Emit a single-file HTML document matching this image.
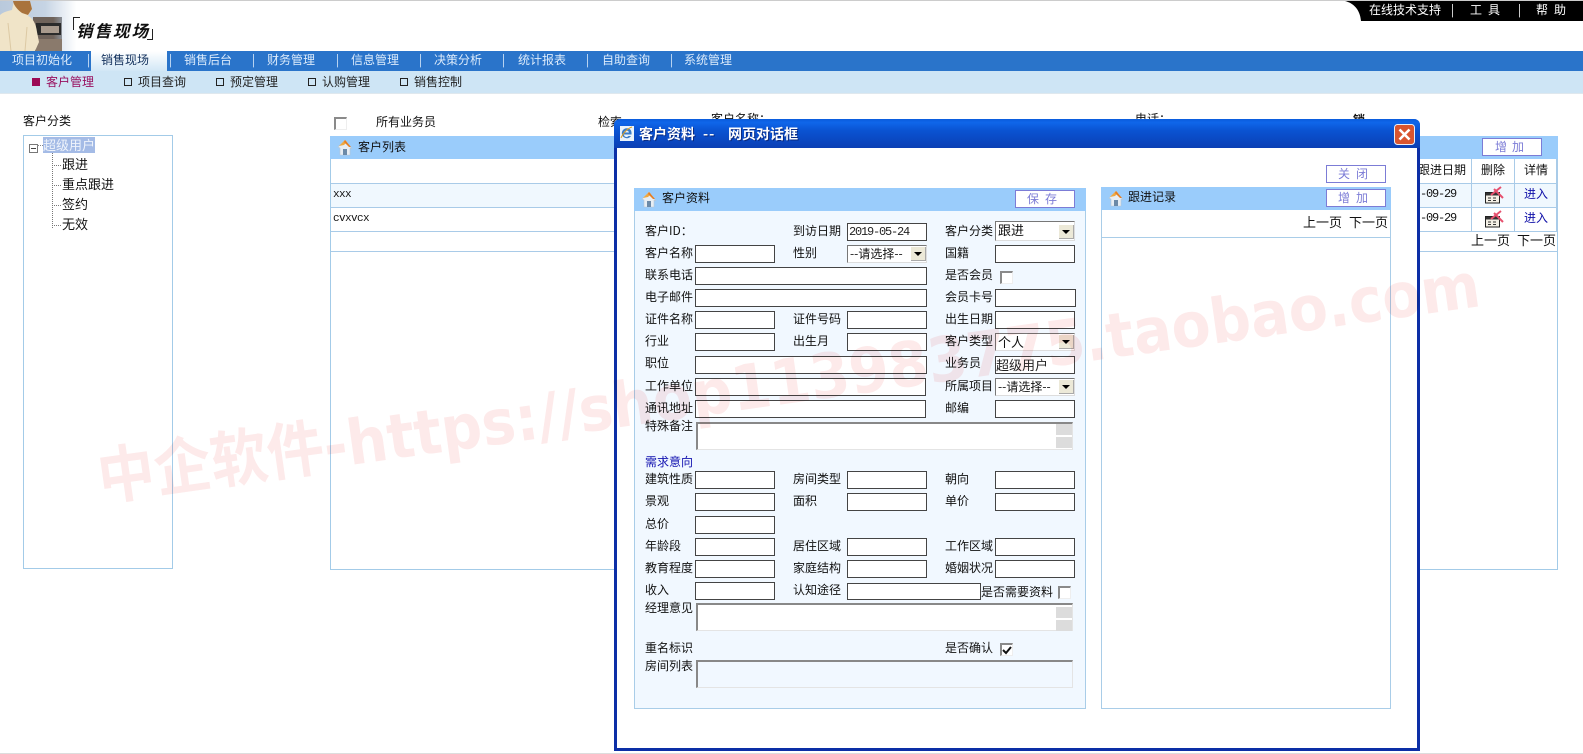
<!DOCTYPE html>
<html><head><meta charset="utf-8"><title>销售现场</title>
<style>
html,body{margin:0;padding:0;background:#fff;width:1583px;height:754px;overflow:hidden}
body{position:relative;font:12px/16px "WenQuanYi Zen Hei","Noto Sans CJK SC",sans-serif;color:#111}
div,span,svg{position:absolute;white-space:nowrap}
.n{top:51px;line-height:18px;color:#dcebfb;height:18px}
.s{top:73px;line-height:17px;color:#222}
.q{width:6px;height:6px;border:1px solid #222;top:78px}
.i{border:1px solid #444;background:#fff;height:16px;width:78px;box-sizing:content-box;font:12px/16px "Liberation Mono",monospace;letter-spacing:-1.2px;color:#222}
.b{border:1px solid #7c7cd6;background:#fff;color:#7c7cd6;width:58px;height:16px;text-align:center;line-height:16px;letter-spacing:3px}
.h{background:#9accfb}
.se{border:1px solid #777;border-right-color:#ddd;border-bottom-color:#ddd;background:#fff;height:16px;width:78px;font-size:12px;line-height:15px;padding-left:2px;box-sizing:content-box;overflow:hidden}
.se i{position:absolute;right:0;top:1px;width:15px;height:14px;background:#ece9d8;border-right:1px solid #aaa;border-bottom:1px solid #aaa;box-sizing:border-box}
.se i b{position:absolute;left:3px;top:5px;width:0;height:0;border-left:4px solid transparent;border-right:4px solid transparent;border-top:4px solid #000}
.c{width:10px;height:10px;border-top:2px solid #8a8a8a;border-left:2px solid #8a8a8a;border-right:1px solid #eee;border-bottom:1px solid #eee;background:#fff}
.t{border-top:2px solid #888;border-left:2px solid #888;border-right:1px solid #e4e4e4;border-bottom:1px solid #e4e4e4;background:#fff;left:696px;width:374px;height:25px}
.sb{left:1056px;width:16px;height:11px;background:#dcdcdc}
.ln{left:331px;width:1227px;height:1px;background:#a9cbe8}
</style></head><body>
<div style="left:0;top:0;width:1583px;height:1px;background:#ccc"></div>
<svg style="left:0;top:1px" width="90" height="50" viewBox="0 0 90 50">
<defs><linearGradient id="f" x1="0" x2="1" y1="0" y2="0"><stop offset="0" stop-color="#b9c9dc"/><stop offset=".5" stop-color="#c6d4e4"/><stop offset=".85" stop-color="#fff"/></linearGradient>
<linearGradient id="m" x1="0" x2="1" y1="0" y2="0"><stop offset=".7" stop-color="#6e625a"/><stop offset="1" stop-color="#8a8f96"/></linearGradient></defs>
<rect width="90" height="50" fill="url(#f)"/>
<rect x="33" y="16" width="29" height="34" fill="url(#m)"/><rect x="36" y="22" width="25" height="12" fill="#2b2b2b"/><rect x="41" y="25" width="18" height="7" fill="#a89a8d"/><rect x="36" y="38" width="26" height="12" fill="#8a7a6c"/>
<path d="M14 0h16l2 8-4 7c5 2 8 8 9 16l2 10-4 9H0V14c3-3 8-4 12-5z" fill="#f0e4c8"/>
<path d="M13 0h17l2 8-4 6-6-2c-4-3-8-7-9-12z" fill="#a9733c"/>
<path d="M8 22l3 28M27 26l-2 24" stroke="#dcc9a4" fill="none"/>
</svg>
<div style="left:73px;top:17px;width:6px;height:12px;border-left:1px solid #222;border-top:1px solid #222"></div>
<div style="left:76px;top:20px;font:italic bold 16.500px/20px 'Noto Sans CJK SC',sans-serif;letter-spacing:2px;color:#111">销售现场</div>
<div style="left:147px;top:29px;width:5px;height:10px;border-right:1px solid #222;border-bottom:1px solid #222"></div>
<svg style="left:1345px;top:1px" width="238" height="20"><path d="M0 0h238v20H16C15 8 8 2 0 0z" fill="#000"/></svg>
<div style="left:1369px;top:2px;color:#fff;line-height:16px">在线技术支持</div>
<div style="left:1451px;top:2px;color:#fff">|</div>
<div style="left:1470px;top:2px;color:#fff;letter-spacing:6px">工具</div>
<div style="left:1518px;top:2px;color:#fff">|</div>
<div style="left:1536px;top:2px;color:#fff;letter-spacing:6px">帮助</div>

<div style="left:0;top:51px;width:1583px;height:20px;background:#2a74ca"></div>
<div style="left:91px;top:51px;width:76px;height:20px;background:linear-gradient(#fff,#d2e7f6)"></div>
<div style="left:0;top:71px;width:1583px;height:23px;background:#cee5f5"></div>
<div style="left:0;top:93px;width:1583px;height:1px;background:#dfe8ee"></div>
<div class="n" style="left:12px">项目初始化</div><div class="n" style="left:87px">|</div>
<div class="n" style="left:101px;color:#12305c">销售现场</div><div class="n" style="left:169px">|</div>
<div class="n" style="left:184px">销售后台</div><div class="n" style="left:252px">|</div>
<div class="n" style="left:267px">财务管理</div><div class="n" style="left:336px">|</div>
<div class="n" style="left:351px">信息管理</div><div class="n" style="left:419px">|</div>
<div class="n" style="left:434px">决策分析</div><div class="n" style="left:502px">|</div>
<div class="n" style="left:518px">统计报表</div><div class="n" style="left:586px">|</div>
<div class="n" style="left:602px">自助查询</div><div class="n" style="left:670px">|</div>
<div class="n" style="left:684px">系统管理</div>

<div style="left:32px;top:78px;width:8px;height:8px;background:#9c0a55"></div>
<div class="s" style="left:46px;color:#98105f">客户管理</div>
<div class="q" style="left:124px"></div><div class="s" style="left:138px">项目查询</div>
<div class="q" style="left:216px"></div><div class="s" style="left:230px">预定管理</div>
<div class="q" style="left:308px"></div><div class="s" style="left:322px">认购管理</div>
<div class="q" style="left:400px"></div><div class="s" style="left:414px">销售控制</div>

<div style="left:23px;top:113px">客户分类</div>
<div style="left:23px;top:135px;width:150px;height:434px;border:1px solid #a3cbe8;box-sizing:border-box"></div>
<div style="left:29px;top:144px;width:7px;height:7px;border:1px solid #777"></div>
<div style="left:31px;top:148px;width:5px;height:1px;background:#444"></div>
<div style="left:37px;top:145px;width:6px;border-top:1px dotted #888"></div>
<div style="left:43px;top:137px;width:52px;height:16px;background:#a4bbe6;color:#eef3fb;font-size:13px;line-height:16px">超级用户</div>
<div style="left:52px;top:153px;height:75px;border-left:1px dotted #777"></div>
<div style="left:52px;top:165px;width:9px;border-top:1px dotted #777"></div>
<div style="left:52px;top:185px;width:9px;border-top:1px dotted #777"></div>
<div style="left:52px;top:205px;width:9px;border-top:1px dotted #777"></div>
<div style="left:52px;top:225px;width:9px;border-top:1px dotted #777"></div>
<div style="left:62px;top:156px;font-size:13px">跟进</div>
<div style="left:62px;top:176px;font-size:13px">重点跟进</div>
<div style="left:62px;top:196px;font-size:13px">签约</div>
<div style="left:62px;top:216px;font-size:13px">无效</div>

<div class="c" style="left:334px;top:117px"></div>
<div style="left:376px;top:114px">所有业务员</div>
<div style="left:598px;top:114px">检索</div>
<div style="left:711px;top:111px">客户名称：</div>
<div style="left:1135px;top:111px">电话：</div>
<div style="left:1353px;top:112px;font-weight:bold">销</div>

<div style="left:330px;top:136px;width:1228px;height:434px;border-left:1px solid #a3cbe8;border-right:1px solid #a3cbe8;border-bottom:1px solid #a3cbe8;box-sizing:border-box"></div>
<div class="h" style="left:330px;top:136px;width:1228px;height:23px"></div>
<svg style="left:337px;top:139px" width="16" height="17" viewBox="0 0 16 17"><path d="M8 1L1 8l2 1v7h10V9l2 1z" fill="#e8eef4" stroke="#b9c6d2" stroke-width=".6"/><path d="M8 1L2 7l5-1 3-3z" fill="#f0a840"/><path d="M8 1l6 7-2 0-5-5z" fill="#e67e22"/><rect x="6" y="10" width="4" height="6" fill="#6c8aa8"/></svg>
<div style="left:358px;top:139px">客户列表</div>
<div class="b" style="left:1482px;top:138px;letter-spacing:5px">增加</div>
<div style="left:331px;top:184px;width:1226px;height:23px;background:#f0f8fe"></div>
<div class="ln" style="top:183px"></div><div class="ln" style="top:207px"></div><div class="ln" style="top:231px"></div><div class="ln" style="top:251px"></div>
<div style="left:1471px;top:159px;width:1px;height:72px;background:#a9cbe8"></div>
<div style="left:1514px;top:159px;width:1px;height:72px;background:#a9cbe8"></div>
<div style="left:1556px;top:159px;width:2px;height:72px;background:#a9cbe8"></div>
<div style="left:333px;top:187px;font:11px/16px 'Liberation Mono',monospace;letter-spacing:-.6px">xxx</div>
<div style="left:333px;top:211px;font:11px/16px 'Liberation Mono',monospace;letter-spacing:-.6px">cvxvcx</div>
<div style="left:1418px;top:162px">跟进日期</div>
<div style="left:1481px;top:162px">删除</div>
<div style="left:1524px;top:162px">详情</div>
<div style="left:1420px;top:186px;font:12px/16px 'Liberation Mono',monospace;letter-spacing:-1.2px">-09-29</div>
<div style="left:1420px;top:210px;font:12px/16px 'Liberation Mono',monospace;letter-spacing:-1.2px">-09-29</div>
<svg style="left:1484px;top:186px" width="20" height="18" viewBox="0 0 20 18"><rect x="1.500" y="6.500" width="14" height="10.500" fill="#f4f0e6" stroke="#222"/><rect x="2" y="7" width="13" height="2.500" fill="#333"/><path d="M4 12h3M9 12h3M4 14.500h3M9 14.500h3" stroke="#333"/><path d="M7 9L17 1M10 3l9 9" stroke="#e6506e" stroke-width="2"/></svg>
<svg style="left:1484px;top:210px" width="20" height="18" viewBox="0 0 20 18"><rect x="1.500" y="6.500" width="14" height="10.500" fill="#f4f0e6" stroke="#222"/><rect x="2" y="7" width="13" height="2.500" fill="#333"/><path d="M4 12h3M9 12h3M4 14.500h3M9 14.500h3" stroke="#333"/><path d="M7 9L17 1M10 3l9 9" stroke="#e6506e" stroke-width="2"/></svg>
<div style="left:1524px;top:186px;color:#1010a8">进入</div>
<div style="left:1524px;top:210px;color:#1010a8">进入</div>
<div style="left:1471px;top:232px;font-size:13px">上一页</div><div style="left:1517px;top:232px;font-size:13px">下一页</div>

<!-- dialog -->
<div style="left:614px;top:119px;width:806px;height:632px;background:#fff;border:3px solid #0c2fa6;border-top:0;box-sizing:border-box;border-radius:6px 6px 0 0"></div>
<div style="left:614px;top:119px;width:806px;height:29px;border-radius:6px 6px 0 0;background:linear-gradient(#0a5cdc 0,#0f66ea 12%,#0a53d2 40%,#0b3fb4 100%)"></div>
<svg style="left:619px;top:125px" width="16" height="17" viewBox="0 0 16 17"><rect x="1" y="1" width="14" height="15" fill="#eaf3fb"/><path d="M12 5.500A5 5 0 1 0 12 11H9.500a2.600 2.600 0 0 1-4.600-1.500H12.500c.2-1.500-.1-3-.5-4zM5 7.500a2.600 2.600 0 0 1 5 0z" fill="#3a7cc8"/><path d="M2 13c2-5 7-10 11-11" stroke="#e0a020" fill="none"/></svg>
<div style="left:639px;top:126px;color:#fff;font-weight:bold;font-size:14px;line-height:16px;text-shadow:1px 1px 0 #0a2a80">客户资料</div>
<div style="left:703px;top:126px;color:#fff;font-weight:bold;font-size:14px;line-height:16px;text-shadow:1px 1px 0 #0a2a80;letter-spacing:1px">--</div>
<div style="left:728px;top:126px;color:#fff;font-weight:bold;font-size:14px;line-height:16px;text-shadow:1px 1px 0 #0a2a80">网页对话框</div>
<svg style="left:1394px;top:124px" width="21" height="21" viewBox="0 0 21 21"><rect x=".5" y=".5" width="20" height="20" rx="3" fill="#d9552f" stroke="#e8eef8"/><path d="M5.500 5.500l10 10M15.500 5.500l-10 10" stroke="#fff" stroke-width="2.600"/></svg>

<div class="b" style="left:1326px;top:165px;letter-spacing:6px">关闭</div>

<div style="left:634px;top:188px;width:452px;height:521px;background:#f1f8ff;border:1px solid #a9cde8;box-sizing:border-box"></div>
<div class="h" style="left:634px;top:188px;width:452px;height:23px"></div>
<svg style="left:641px;top:191px" width="16" height="17" viewBox="0 0 16 17"><path d="M8 1L1 8l2 1v7h10V9l2 1z" fill="#e8eef4" stroke="#b9c6d2" stroke-width=".6"/><path d="M8 1L2 7l5-1 3-3z" fill="#f0a840"/><path d="M8 1l6 7-2 0-5-5z" fill="#e67e22"/><rect x="6" y="10" width="4" height="6" fill="#6c8aa8"/></svg>
<div style="left:662px;top:190px">客户资料</div>
<div class="b" style="left:1015px;top:190px;letter-spacing:6px">保存</div>

<div style="left:1101px;top:187px;width:290px;height:522px;background:#fff;border:1px solid #a9cde8;box-sizing:border-box"></div>
<div class="h" style="left:1101px;top:187px;width:290px;height:23px"></div>
<svg style="left:1108px;top:190px" width="16" height="17" viewBox="0 0 16 17"><path d="M8 1L1 8l2 1v7h10V9l2 1z" fill="#e8eef4" stroke="#b9c6d2" stroke-width=".6"/><path d="M8 1L2 7l5-1 3-3z" fill="#f0a840"/><path d="M8 1l6 7-2 0-5-5z" fill="#e67e22"/><rect x="6" y="10" width="4" height="6" fill="#6c8aa8"/></svg>
<div style="left:1128px;top:189px">跟进记录</div>
<div class="b" style="left:1326px;top:189px;letter-spacing:6px">增加</div>
<div style="left:1303px;top:214px;font-size:13px">上一页</div><div style="left:1349px;top:214px;font-size:13px">下一页</div>
<div style="left:1102px;top:237px;width:288px;height:1px;background:#a9cde8"></div>

<!-- form -->
<div style="left:645px;top:223px">客户ID：</div><div style="left:793px;top:223px">到访日期</div><div style="left:945px;top:223px">客户分类</div>
<div class="i" style="left:847px;top:223px;padding-left:1px;width:77px">2019-05-24</div>
<div class="se" style="left:995px;top:221px;width:76px;height:18px;font-size:13px">跟进<i style="top:3px"><b></b></i></div>

<div style="left:645px;top:245px">客户名称</div><div class="i" style="left:695px;top:245px"></div>
<div style="left:793px;top:245px">性别</div><div class="se" style="left:847px;top:245px;width:76px">--请选择--<i><b></b></i></div>
<div style="left:945px;top:245px">国籍</div><div class="i" style="left:995px;top:245px"></div>

<div style="left:645px;top:267px">联系电话</div><div class="i" style="left:695px;top:267px;width:230px"></div>
<div style="left:945px;top:267px">是否会员</div><div class="c" style="left:1000px;top:271px"></div>

<div style="left:645px;top:289px">电子邮件</div><div class="i" style="left:695px;top:289px;width:230px"></div>
<div style="left:945px;top:289px">会员卡号</div><div class="i" style="left:995px;top:289px;width:79px"></div>

<div style="left:645px;top:311px">证件名称</div><div class="i" style="left:695px;top:311px"></div>
<div style="left:793px;top:311px">证件号码</div><div class="i" style="left:847px;top:311px"></div>
<div style="left:945px;top:311px">出生日期</div><div class="i" style="left:995px;top:311px"></div>

<div style="left:645px;top:333px">行业</div><div class="i" style="left:695px;top:333px"></div>
<div style="left:793px;top:333px">出生月</div><div class="i" style="left:847px;top:333px"></div>
<div style="left:945px;top:333px">客户类型</div><div class="se" style="left:995px;top:333px;width:76px;font-size:13px">个人<i><b></b></i></div>

<div style="left:645px;top:355px">职位</div><div class="i" style="left:695px;top:356px;width:230px"></div>
<div style="left:945px;top:355px">业务员</div><div class="i" style="left:995px;top:356px;font:13px/16px 'WenQuanYi Zen Hei','Noto Sans CJK SC',sans-serif;letter-spacing:0">超级用户</div>

<div style="left:645px;top:378px">工作单位</div><div class="i" style="left:695px;top:378px;width:229px"></div>
<div style="left:945px;top:378px">所属项目</div><div class="se" style="left:995px;top:378px;width:76px">--请选择--<i><b></b></i></div>

<div style="left:645px;top:400px">通讯地址</div><div class="i" style="left:695px;top:400px;width:229px"></div>
<div style="left:945px;top:400px">邮编</div><div class="i" style="left:995px;top:400px"></div>

<div style="left:645px;top:418px">特殊备注</div>
<div class="t" style="top:422px"></div><div class="sb" style="top:424px"></div><div class="sb" style="top:437px"></div>

<div style="left:645px;top:454px;color:#1212b0">需求意向</div>

<div style="left:645px;top:471px">建筑性质</div><div class="i" style="left:695px;top:471px"></div>
<div style="left:793px;top:471px">房间类型</div><div class="i" style="left:847px;top:471px"></div>
<div style="left:945px;top:471px">朝向</div><div class="i" style="left:995px;top:471px"></div>

<div style="left:645px;top:493px">景观</div><div class="i" style="left:695px;top:493px"></div>
<div style="left:793px;top:493px">面积</div><div class="i" style="left:847px;top:493px"></div>
<div style="left:945px;top:493px">单价</div><div class="i" style="left:995px;top:493px"></div>

<div style="left:645px;top:516px">总价</div><div class="i" style="left:695px;top:516px"></div>

<div style="left:645px;top:538px">年龄段</div><div class="i" style="left:695px;top:538px"></div>
<div style="left:793px;top:538px">居住区域</div><div class="i" style="left:847px;top:538px"></div>
<div style="left:945px;top:538px">工作区域</div><div class="i" style="left:995px;top:538px"></div>

<div style="left:645px;top:560px">教育程度</div><div class="i" style="left:695px;top:560px"></div>
<div style="left:793px;top:560px">家庭结构</div><div class="i" style="left:847px;top:560px"></div>
<div style="left:945px;top:560px">婚姻状况</div><div class="i" style="left:995px;top:560px"></div>

<div style="left:645px;top:582px">收入</div><div class="i" style="left:695px;top:582px"></div>
<div style="left:793px;top:582px">认知途径</div><div class="i" style="left:847px;top:583px;width:132px;height:15px"></div>
<div style="left:981px;top:584px">是否需要资料</div><div class="c" style="left:1058px;top:586px"></div>

<div style="left:645px;top:600px">经理意见</div>
<div class="t" style="top:603px"></div><div class="sb" style="top:607px"></div><div class="sb" style="top:620px"></div>

<div style="left:645px;top:640px">重名标识</div><div style="left:945px;top:640px">是否确认</div>
<div class="c" style="left:1000px;top:643px"></div>
<svg style="left:1001px;top:644px" width="12" height="12"><path d="M2 6l3 3 5-6" fill="none" stroke="#111" stroke-width="2"/></svg>

<div style="left:645px;top:658px">房间列表</div>
<div class="t" style="top:660px;background:#f1f8ff"></div>

<div style="left:0;top:753px;width:1583px;height:1px;background:#ddd"></div>

<svg style="left:0;top:0;mix-blend-mode:multiply;pointer-events:none" width="1583" height="754">
<text transform="translate(101 500) rotate(-8)" font-family="'DejaVu Sans','Noto Sans CJK SC',sans-serif" font-weight="bold" font-size="62" fill="#fdeaea" textLength="1395" lengthAdjust="spacingAndGlyphs">中企软件-https://shop113983775.taobao.com</text>
</svg>
</body></html>
